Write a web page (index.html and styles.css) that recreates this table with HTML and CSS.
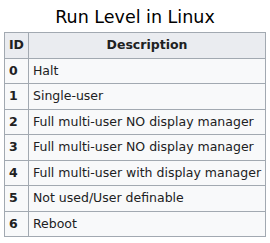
FILE: index.html
```html
<!DOCTYPE html>
<html lang="en">

<head>
    <meta charset="UTF-8">
    <title>Run Level in Linux</title>
    <link rel="stylesheet" href="styles.css">
</head>

<body>
    <table class="runlevels">
        <caption>Run Level in Linux</caption>
        <tr>
            <th>ID</th>
            <th>Description</th>
        </tr>
        <tr>
            <th class="id">0</th>
            <td>Halt</td>
        </tr>
        <tr>
            <th class="id">1</th>
            <td>Single-user</td>
        </tr>
        <tr>
            <th class="id">2</th>
            <td>Full multi-user NO display manager</td>
        </tr>
        <tr>
            <th class="id">3</th>
            <td>Full multi-user NO display manager</td>
        </tr>
        <tr>
            <th class="id">4</th>
            <td>Full multi-user with display manager</td>
        </tr>
        <tr>
            <th class="id">5</th>
            <td>Not used/User definable</td>
        </tr>
        <tr>
            <th class="id">6</th>
            <td>Reboot</td>
        </tr>
    </table>
</body>

</html>
```

FILE: styles.css
```css
body {
    margin: 0;
    background-color: #ffffff;
    font-family: 'DejaVu Sans', sans-serif;
    color: #202122;
}

.runlevels {
    margin: 7px auto 0;
    border-collapse: collapse;
    border: 1px solid #a2a9b1;
    background-color: #f8f9fa;
    font-size: 12.5px;
}

.runlevels caption {
    font-size: 17.5px;
    line-height: 21px;
    font-weight: normal;
    color: #000000;
    padding-bottom: 4px;
}

.runlevels th,
.runlevels td {
    border: 1px solid #a2a9b1;
    padding: 3px 4px;
    line-height: 18.5px;
}

.runlevels tr:first-child th {
    background-color: #eaecf0;
    text-align: center;
}

.runlevels th.id {
    text-align: left;
    background-color: #f8f9fa;
}
```
